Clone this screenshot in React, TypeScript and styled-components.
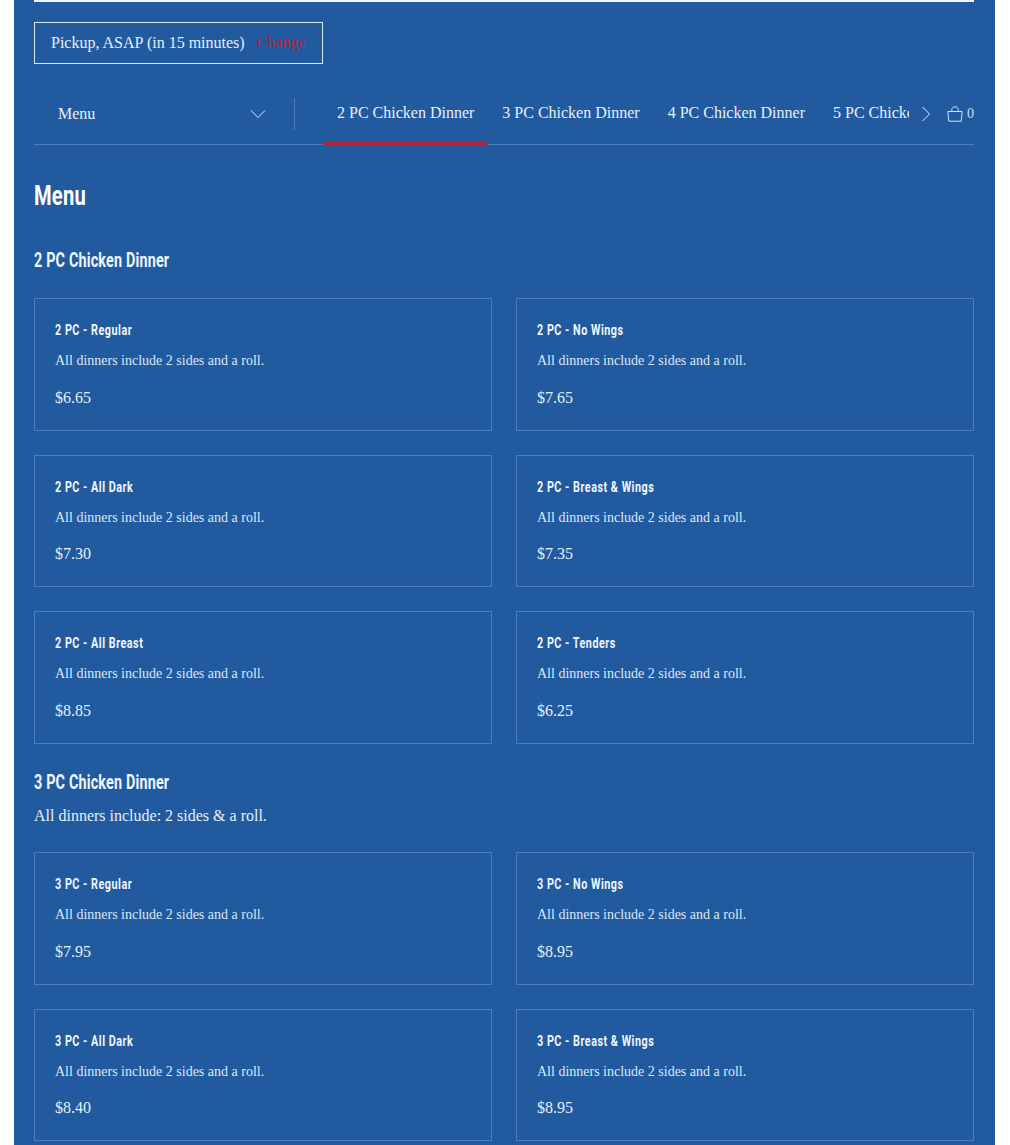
import React from 'react'
import styled, { createGlobalStyle } from 'styled-components'

const serif = '"Liberation Serif", "Times New Roman", serif'
const narrow = '"Roboto", "Liberation Sans", Arial, sans-serif'

const tabs = ['2 PC Chicken Dinner', '3 PC Chicken Dinner', '4 PC Chicken Dinner', '5 PC Chicken Dinner']

const desc = 'All dinners include 2 sides and a roll.'

const sections = [
  {
    name: '2 PC Chicken Dinner',
    items: [
      { name: '2 PC - Regular', price: '$6.65' },
      { name: '2 PC - No Wings', price: '$7.65' },
      { name: '2 PC - All Dark', price: '$7.30' },
      { name: '2 PC - Breast & Wings', price: '$7.35' },
      { name: '2 PC - All Breast', price: '$8.85' },
      { name: '2 PC - Tenders', price: '$6.25' },
    ],
  },
  {
    name: '3 PC Chicken Dinner',
    note: 'All dinners include: 2 sides & a roll.',
    items: [
      { name: '3 PC - Regular', price: '$7.95' },
      { name: '3 PC - No Wings', price: '$8.95' },
      { name: '3 PC - All Dark', price: '$8.40' },
      { name: '3 PC - Breast & Wings', price: '$8.95' },
    ],
  },
]

const App = () => {
  return (
    <Page>
      <GlobalStyle />
      <TopLine />
      <PickupBox>
        <span>Pickup, ASAP (in 15 minutes)</span>
        <ChangeLink href="#">Change</ChangeLink>
      </PickupBox>

      <NavBar>
        <MenuSelect>
          <span>Menu</span>
          <svg width="16" height="10" viewBox="0 0 16 10" fill="none" stroke="#e3eefa" strokeWidth="1">
            <path d="M1 1.5l7 7 7-7" />
          </svg>
        </MenuSelect>
        <TabStrip>
          {tabs.map((tab, i) => (
            <Tab key={tab} active={i === 0}>
              {tab}
            </Tab>
          ))}
        </TabStrip>
        <NextArrow>
          <svg width="10" height="16" viewBox="0 0 10 16" fill="none" stroke="#e3eefa" strokeWidth="1">
            <path d="M1.5 1l7 7-7 7" />
          </svg>
        </NextArrow>
        <Cart>
          <svg width="16" height="16" viewBox="0 0 16 16" fill="none" stroke="#cfe0f5" strokeWidth="1">
            <path d="M.8 5.5h14.4l-1 9.7H1.8z" />
            <path d="M4.8 5.5V3.6C4.8 1.8 6.2.8 8 .8s3.2 1 3.2 2.8v1.9" />
          </svg>
          <span>0</span>
        </Cart>
      </NavBar>

      <PageTitle>
        <Squeezed>Menu</Squeezed>
      </PageTitle>

      {sections.map(section => (
        <Section key={section.name} withNote={!!section.note}>
          <SectionTitle>
            <Squeezed>{section.name}</Squeezed>
          </SectionTitle>
          {section.note && <SectionNote>{section.note}</SectionNote>}
          <CardGrid withNote={!!section.note}>
            {section.items.map(item => (
              <Card key={item.name}>
                <CardTitle>
                  <Squeezed>{item.name}</Squeezed>
                </CardTitle>
                <CardDesc>{desc}</CardDesc>
                <CardPrice>{item.price}</CardPrice>
              </Card>
            ))}
          </CardGrid>
        </Section>
      ))}
    </Page>
  )
}

export default App

const GlobalStyle = createGlobalStyle`
  html, body {
    margin: 0;
    padding: 0;
    background: #fff;
    overflow: hidden;
  }
`

const Page = styled.div`
  width: 981px;
  height: 1145px;
  margin-left: 14px;
  padding: 0 21px 0 20px;
  box-sizing: border-box;
  overflow: hidden;
  background: #215a9e;
  color: #e6f0fb;
  font-family: ${serif};
`

const TopLine = styled.div`
  height: 2px;
  background: #f4f7fb;
`

const PickupBox = styled.div`
  box-sizing: border-box;
  width: 289px;
  height: 42px;
  margin-top: 20px;
  padding-left: 16px;
  display: flex;
  align-items: center;
  gap: 12px;
  border: 1px solid #dbe8f7;
  font-size: 16px;
`

const ChangeLink = styled.a`
  color: #b3263a;
  text-decoration: underline;
`

const NavBar = styled.div`
  box-sizing: border-box;
  height: 63px;
  margin-top: 18px;
  display: flex;
  align-items: stretch;
  border-bottom: 1px solid #4a7dbd;
`

const MenuSelect = styled.div`
  position: relative;
  width: 261px;
  box-sizing: border-box;
  padding: 2px 29px 0 24px;
  display: flex;
  align-items: center;
  justify-content: space-between;
  font-size: 16px;

  &::after {
    content: '';
    position: absolute;
    right: 0;
    top: 16px;
    height: 32px;
    width: 1px;
    background: #4a7dbd;
  }
`

const TabStrip = styled.div`
  width: 586px;
  margin: 0 0 -1px 28px;
  display: flex;
  overflow: hidden;
  flex-shrink: 0;
`

const Tab = styled.div<{ active?: boolean }>`
  flex-shrink: 0;
  height: 63px;
  box-sizing: border-box;
  padding: 2px 14px 0;
  display: flex;
  align-items: center;
  white-space: nowrap;
  font-size: 16px;
  border-bottom: 3px solid ${props => (props.active ? '#b3263a' : 'transparent')};
`

const NextArrow = styled.div`
  width: 16px;
  margin-left: 12px;
  padding-top: 2px;
  display: flex;
  align-items: center;
`

const Cart = styled.div`
  margin-left: 10px;
  display: flex;
  align-items: center;
  gap: 4px;
  padding-top: 1px;
  font-size: 14px;
  color: #cfe0f5;
`

// the reference heading face is a condensed grotesque, no installed family has that width
const Squeezed = styled.span`
  display: inline-block;
  white-space: nowrap;
  transform: scaleX(0.72);
  transform-origin: left center;
`

const PageTitle = styled.h1`
  margin: 34px 0 0;
  height: 34px;
  line-height: 34px;
  font-family: ${narrow};
  font-size: 28px;
  font-weight: 700;
  letter-spacing: 0.3px;
  color: #fff;
`

const Section = styled.section<{ withNote?: boolean }>`
  margin-top: ${props => (props.withNote ? '24px' : '33px')};
`

const SectionTitle = styled.h2`
  margin: 0;
  height: 28px;
  line-height: 28px;
  font-family: ${narrow};
  font-size: 20px;
  font-weight: 700;
  letter-spacing: 0.22px;
  color: #eef5fd;
`

const SectionNote = styled.p`
  margin: 10px 0 0;
  height: 20px;
  line-height: 20px;
  font-size: 16px;
`

const CardGrid = styled.div<{ withNote?: boolean }>`
  margin-top: ${props => (props.withNote ? '26px' : '24px')};
  display: grid;
  grid-template-columns: 458px 458px;
  column-gap: 24px;
  row-gap: 24px;
`

const Card = styled.div`
  box-sizing: border-box;
  height: 132.67px;
  padding: 22px 20px 0;
  border: 1px solid #4a7dbd;
`

const CardTitle = styled.div`
  height: 18px;
  line-height: 18px;
  font-family: ${narrow};
  font-size: 15px;
  font-weight: 700;
  letter-spacing: 0.7px;
  color: #f2f7fd;
`

const CardDesc = styled.div`
  margin-top: 13px;
  height: 18px;
  line-height: 18px;
  font-size: 14px;
  color: #dbe8f7;
`

const CardPrice = styled.div`
  margin-top: 17.7px;
  height: 20px;
  line-height: 20px;
  font-size: 16px;
`
